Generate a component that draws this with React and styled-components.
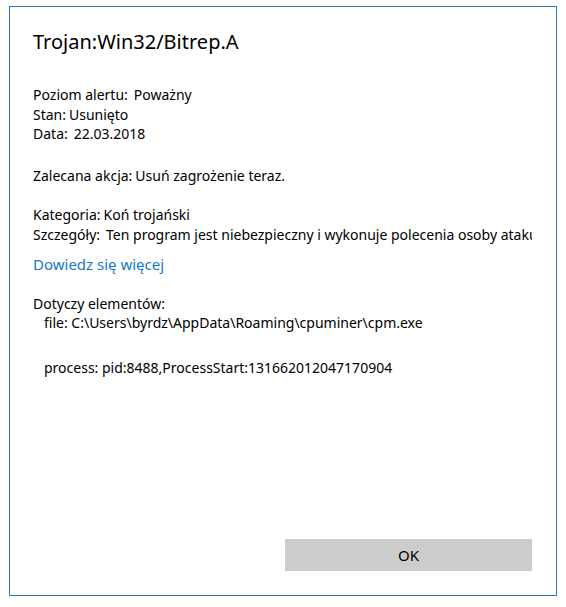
import React from "react";
import styled, { createGlobalStyle } from "styled-components";

const GlobalStyle = createGlobalStyle`
  html, body {
    margin: 0;
    padding: 0;
    background: #ffffff;
  }
  body {
    font-family: "Segoe UI", "Noto Sans", "Open Sans", sans-serif;
    color: #000000;
  }
`;

const Dialog = styled.div`
  box-sizing: border-box;
  width: 548px;
  height: 590px;
  margin: 6px 0 0 9px;
  border: 1px solid #2b79c0;
  background: #ffffff;
  padding: 21px 24px 24px 23px;
  display: flex;
  flex-direction: column;
`;

const Title = styled.h1`
  margin: 0;
  font-size: 20px;
  line-height: 28px;
  font-weight: 400;
`;

const Section = styled.div`
  margin-top: ${(props) => props.$gap || 0}px;
  font-size: 14px;
  line-height: 19.5px;
`;

const Line = styled.div`
  white-space: nowrap;
  overflow: hidden;
  padding-left: ${(props) => (props.$indent ? 11 : 0)}px;
  margin-top: ${(props) => props.$space || 0}px;
`;

const Value = styled.span`
  margin-left: ${(props) => (props.$wide ? 6 : 3)}px;
`;

const Link = styled.a`
  display: block;
  color: #1479c9;
  text-decoration: none;
  font-size: 15px;
  cursor: pointer;
`;

const Footer = styled.div`
  margin-top: auto;
  display: flex;
  justify-content: flex-end;
`;

const Button = styled.button`
  width: 247px;
  height: 32px;
  border: none;
  background: #cccccc;
  font-family: inherit;
  font-size: 15px;
  color: #000000;
  padding: 0;
`;

export default function App() {
  return (
    <>
      <GlobalStyle />
      <Dialog>
        <Title>Trojan:Win32/Bitrep.A</Title>

        <Section $gap={29}>
          <Line>
            Poziom alertu:<Value $wide>Poważny</Value>
          </Line>
          <Line>
            Stan:<Value>Usunięto</Value>
          </Line>
          <Line>
            Data:<Value $wide>22.03.2018</Value>
          </Line>
        </Section>

        <Section $gap={22}>
          <Line>
            Zalecana akcja:<Value>Usuń zagrożenie teraz.</Value>
          </Line>
        </Section>

        <Section $gap={20}>
          <Line>
            Kategoria:<Value>Koń trojański</Value>
          </Line>
          <Line>
            Szczegóły:
            <Value $wide>
              Ten program jest niebezpieczny i wykonuje polecenia osoby atakującej.
            </Value>
          </Line>
        </Section>

        <Section $gap={11}>
          <Link>Dowiedz się więcej</Link>
        </Section>

        <Section $gap={19}>
          <Line>Dotyczy elementów:</Line>
          <Line $indent>file: C:\Users\byrdz\AppData\Roaming\cpuminer\cpm.exe</Line>
          <Line $indent $space={25}>
            process: pid:8488,ProcessStart:131662012047170904
          </Line>
        </Section>

        <Footer>
          <Button>OK</Button>
        </Footer>
      </Dialog>
    </>
  );
}
